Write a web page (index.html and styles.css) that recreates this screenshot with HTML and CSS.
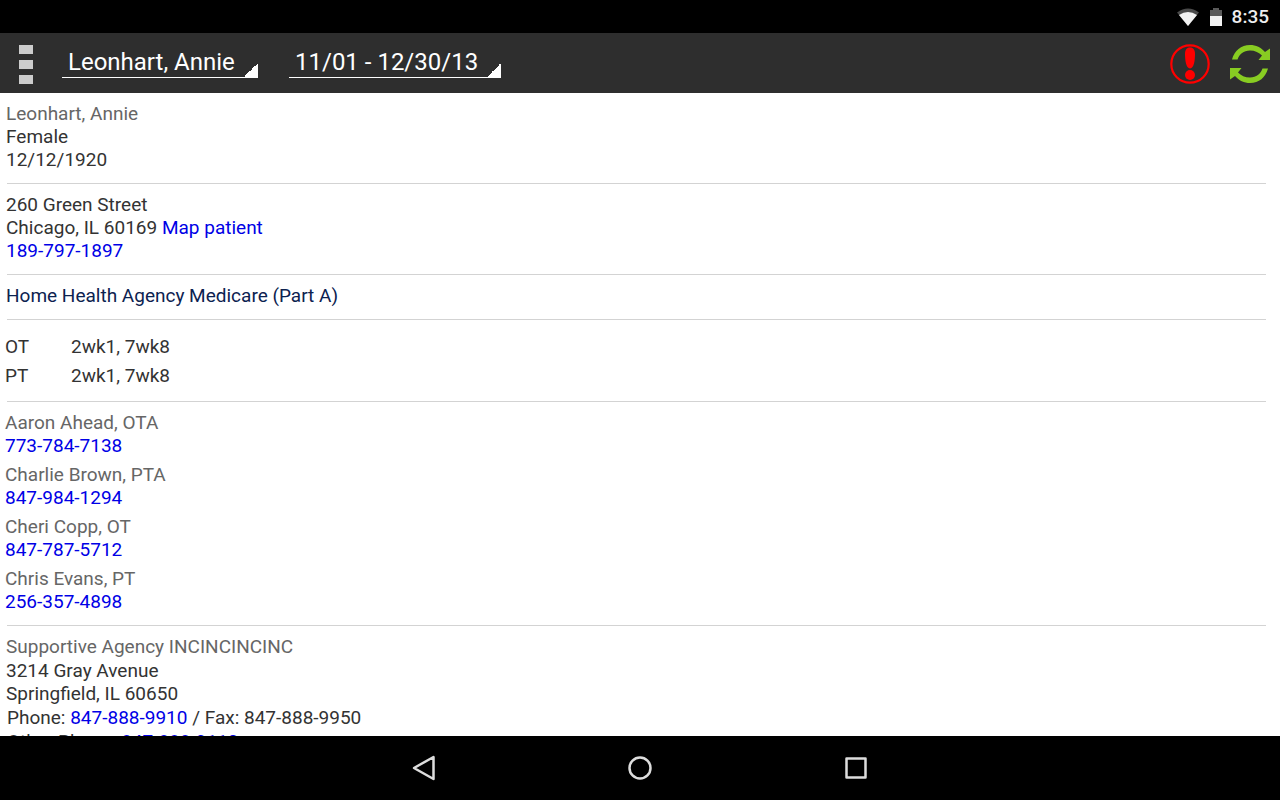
FILE: index.html
```html
<!DOCTYPE html>
<html lang="en">
<head>
    <meta charset="UTF-8">
    <meta name="viewport" content="width=device-width, initial-scale=1.0">
    <title>Patient Details</title>
    <link rel="stylesheet" href="styles.css">
</head>
<body>
    <div class="status-bar">
        <svg width="24" height="20" viewBox="0 0 24 20" aria-hidden="true">
            <path d="M1 5.500Q12-2.500 23 5.500L12 19Z" fill="#4a4a4a"/>
            <path d="M3 8Q12 2 21 8L12 19Z" fill="#f2f2f2"/>
        </svg>
        <svg width="14" height="20" viewBox="0 0 14 20" aria-hidden="true">
            <path d="M4 1h6v2h3v6H1V3h3z" fill="#5a5a5a"/>
            <path d="M1 9h12v10H1z" fill="#f2f2f2"/>
        </svg>
        <span class="clock">8:35</span>
    </div>

    <header class="toolbar">
        <button class="menu-button" aria-label="Menu">
            <span></span>
            <span></span>
            <span></span>
        </button>
        <select class="spinner patient" aria-label="Patient">
            <option>Leonhart, Annie</option>
        </select>
        <select class="spinner period" aria-label="Period">
            <option>11/01 - 12/30/13</option>
        </select>
        <div class="actions">
            <button aria-label="Alerts">
                <svg width="40" height="40" viewBox="0 0 40 40">
                    <circle cx="20" cy="20" r="18.700" fill="none" stroke="#f00" stroke-width="2.200"/>
                    <path d="M20 3.500C23.500 3.500 25 6 25 10C25 16 24 24.500 20 24.500S15 16 15 10C15 6 16.500 3.500 20 3.500Z" fill="#f00"/>
                    <circle cx="20" cy="31" r="5" fill="#f00"/>
                </svg>
            </button>
            <button aria-label="Sync">
                <svg width="40" height="40" viewBox="0 0 40 40">
                    <g id="arrow" fill="#8c2">
                        <path d="M2 15.500C4.500 6.500 11 1 20 1C26 1 31 3.500 35 8L40 4.500V16H28.500L32 11.500C29 8.500 25 6.500 20 6.500C13.500 6.500 9.500 10 7.500 15.500Z"/>
                    </g>
                    <use href="#arrow" transform="rotate(180 20 20)"/>
                </svg>
            </button>
        </div>
    </header>

    <main class="content">
        <section>
            <div class="name">Leonhart, Annie</div>
            <div>Female</div>
            <div>12/12/1920</div>
        </section>
        <hr>
        <section>
            <div>260 Green Street</div>
            <div>Chicago, IL 60169 <a href="#map">Map patient</a></div>
            <div><a href="tel:189-797-1897">189-797-1897</a></div>
        </section>
        <hr>
        <section class="payer">Home Health Agency Medicare (Part A)</section>
        <hr>
        <section class="orders">
            <table>
                <tr>
                    <th scope="row">OT</th>
                    <td>2wk1, 7wk8</td>
                </tr>
                <tr>
                    <th scope="row">PT</th>
                    <td>2wk1, 7wk8</td>
                </tr>
            </table>
        </section>
        <hr>
        <section class="team">
            <div>
                <div class="name">Aaron Ahead, OTA</div>
                <a href="tel:773-784-7138">773-784-7138</a>
            </div>
            <div>
                <div class="name">Charlie Brown, PTA</div>
                <a href="tel:847-984-1294">847-984-1294</a>
            </div>
            <div>
                <div class="name">Cheri Copp, OT</div>
                <a href="tel:847-787-5712">847-787-5712</a>
            </div>
            <div>
                <div class="name">Chris Evans, PT</div>
                <a href="tel:256-357-4898">256-357-4898</a>
            </div>
        </section>
        <hr>
        <section class="agency">
            <div class="name">Supportive Agency INCINCINCINC</div>
            <div>3214 Gray Avenue<br>Springfield, IL 60650</div>
            <div class="phones">Phone: <a href="tel:847-888-9910">847-888-9910</a> / Fax: 847-888-9950</div>
            <div class="phones">Other Phone: <a href="tel:847-888-9110">847-888-9110</a></div>
        </section>
    </main>

    <nav class="nav-bar">
        <button aria-label="Back">
            <svg width="24" height="26" viewBox="0 0 24 26">
                <path d="M21.500 2V24L2 13Z"/>
            </svg>
        </button>
        <button aria-label="Home">
            <svg width="24" height="26" viewBox="0 0 24 26">
                <circle cx="12" cy="13" r="10.500"/>
            </svg>
        </button>
        <button aria-label="Recent apps">
            <svg width="24" height="26" viewBox="0 0 24 26">
                <rect x="2.500" y="3.500" width="19" height="19"/>
            </svg>
        </button>
    </nav>
</body>
</html>
```

FILE: styles.css
```css
* {
    box-sizing: border-box;
}
body {
    display: flex;
    flex-direction: column;
    height: 100vh;
    margin: 0;
    background-color: #fff;
    color: #333;
    font-family: Roboto, sans-serif;
    font-size: 19px;
    line-height: 23px;
}
button {
    padding: 0;
    border: none;
    background: none;
    cursor: pointer;
}
svg {
    display: block;
}

/* System status bar */
.status-bar {
    display: flex;
    flex: none;
    align-items: center;
    justify-content: flex-end;
    gap: 9px;
    height: 33px;
    padding-right: 11px;
    background-color: #000;
    color: #eee;
}
.clock {
    font-weight: 500;
}

/* Toolbar */
.toolbar {
    display: flex;
    flex: none;
    align-items: center;
    height: 60px;
    padding: 0 10px 0 19px;
    background-color: #2e2e2e;
}
.menu-button {
    display: grid;
    gap: 6px;
    margin-right: 29px;
    padding-top: 2px;
}
.menu-button span {
    width: 14px;
    height: 9px;
    background-color: #ccc;
}
.spinner {
    height: 30px;
    margin-right: 31px;
    padding: 0 6px 2px;
    appearance: none;
    border: none;
    border-bottom: 1px solid #fff;
    border-radius: 0;
    background: linear-gradient(135deg, transparent 50%, #fff 50%) right bottom / 14px 14px no-repeat;
    color: #fff;
    font-family: inherit;
    font-size: 24px;
}
.patient {
    width: 196px;
}
.period {
    width: 212px;
}
.actions {
    display: flex;
    gap: 20px;
    margin-left: auto;
    padding-top: 2px;
}

/* Patient details */
.content {
    flex: 1;
    min-height: 0;
    overflow-y: auto;
    scrollbar-width: none;
}
section {
    padding: 9px 6px 12px;
}
hr {
    height: 1px;
    margin: 0 14px 0 7px;
    border: none;
    background-color: #d3d3d3;
}
a {
    color: #0000e6;
    text-decoration: none;
}
.name {
    color: #666;
}
.payer {
    color: #0c2250;
}
.orders {
    padding: 12px 5px 11px;
}
.orders table {
    border-collapse: collapse;
}
.orders th,
.orders td {
    padding: 3px 0;
    font-weight: normal;
    text-align: left;
}
.orders th {
    width: 66px;
}
.team {
    display: grid;
    gap: 6px;
    padding-left: 5px;
}
.agency {
    display: grid;
    gap: 1px;
}
.phones {
    padding-left: 1px;
}

/* System navigation */
.nav-bar {
    display: flex;
    flex: none;
    align-items: center;
    justify-content: center;
    gap: 192px;
    height: 64px;
    background-color: #000;
}
.nav-bar svg {
    fill: none;
    stroke: #ddd;
    stroke-width: 2.5px;
    stroke-linejoin: round;
}
```
